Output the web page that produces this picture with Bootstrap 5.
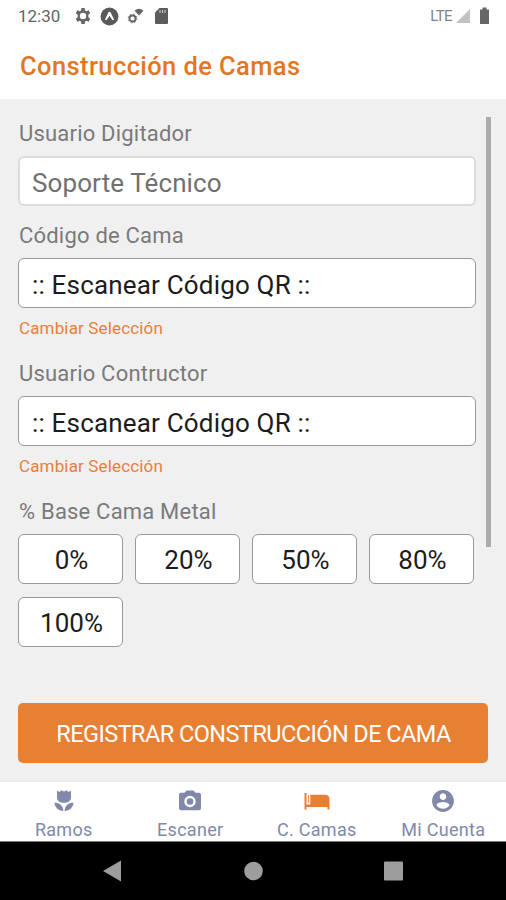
<!DOCTYPE html>
<html lang="es">
<head>
<meta charset="utf-8">
<meta name="viewport" content="width=device-width, initial-scale=1">
<title>Construcción de Camas</title>
<link href="https://cdn.jsdelivr.net/npm/bootstrap@5.3.0/dist/css/bootstrap.min.css" rel="stylesheet">
<style>
  body { font-family: Roboto, "Liberation Sans", sans-serif; background: #fff; }
  svg { display: block; flex: none; }
  .screen { width: 506px; height: 900px; }
  .status-bar { height: 32px; padding: 0 15px 0 18px; color: #666; }
  .clock { font-size: 17px; line-height: 30px; letter-spacing: 0; width: 57px; }
  .lte { font-size: 15px; line-height: 30px; color: #858585; letter-spacing: -.6px; }
  .title-bar { height: 67px; padding: 0 20px; }
  .title-bar h1 { font-size: 25.5px; line-height: 68px; font-weight: 500; color: #e2771f; letter-spacing: .4px; }
  .content { height: 683px; background: #f0f0f0; padding: 22px 18px 17px; border-bottom: 2px solid #ececec; }
  .form-area { width: 458px; }
  .caption { font-size: 22px; line-height: 26px; height: 24px; margin-bottom: 11px; color: #7a7a7a; letter-spacing: .2px; padding-left: 1px; }
  .box { height: 50px; border: 1px solid #999; border-radius: 6px; background: #fff; color: #1c1c1c; font-size: 26px; line-height: 52px; letter-spacing: .18px; }
  .field { padding: 0 13px; margin-bottom: 8px; }
  .field.locked { border: 2px solid #dcdcdc; color: #707070; line-height: 50px; padding: 0 12px; margin-bottom: 17px; letter-spacing: .1px; }
  .change { font-size: 17px; line-height: 24px; height: 24px; color: #e6803c; margin-bottom: 21px; padding-left: 1px; letter-spacing: .15px; }
  .options { gap: 13px 12px; }
  .options .box { width: 105px; padding: 3px 0 0 2px; line-height: 45px; letter-spacing: 0; }
  .scroll-track { width: 5px; height: 430px; margin: -4px -3px 0 0; background: #ababab; }
  .submit { width: 470px; height: 60px; background: #e78033; border-radius: 5px; color: #fff; font-size: 23.5px; letter-spacing: -.56px; padding: 3px 0 0 1px; }
  .submit:hover { background: #d9752b; color: #fff; }
  .tabs { height: 60px; border-bottom: 1px solid #777; }
  .tab { color: #8188aa; font-size: 18px; line-height: 24px; letter-spacing: .3px; text-decoration: none; padding: 7px 0 0 1px; gap: 5px; }
  .tab .orange { color: #e78033; }
  .system-nav { height: 58px; background: #000; color: #9d9d9d; padding: 0 102px; }
</style>
</head>
<body>
<div class="screen d-flex flex-column overflow-hidden">
  <header class="status-bar d-flex align-items-center">
    <span class="clock">12:30</span>
    <svg width="16" height="16" viewBox="2 2 20 20" fill="currentColor"><path fill-rule="evenodd" d="M10 2h4l.5 3 1.700 1 2.800-1.100 2 3.500-2.300 1.900v3.400L21 15.600l-2 3.500-2.800-1.100-1.700 1-.5 3h-4l-.5-3-1.700-1L5 19.100l-2-3.500 2.300-1.900v-3.400L3 8.400l2-3.500L7.800 6l1.700-1zM12 8a4 4 0 1 0 0 8 4 4 0 0 0 0-8z"/></svg>
    <svg class="ms-2 me-1" width="20" height="19" viewBox="-1 0 20 19"><circle cx="9.500" cy="9.500" r="9" fill="#5a5a5a"/><path d="M5 12.500 8.300 5.600Q9.500 4 10.700 5.600L14 12.500Q13 14 12 12.500L9.500 8.800 7 12.500Q6 14 5 12.500z" fill="#fff"/></svg>
    <svg class="ms-1" width="20" height="16" viewBox="0 0 20 16"><circle cx="5.500" cy="10.500" r="3" fill="none" stroke="#666" stroke-width="1.800"/><circle cx="5.500" cy="10.500" r="4.300" fill="none" stroke="#666" stroke-width="1" stroke-dasharray="1.700 1.680"/><path d="M7.500 2.700Q12 -1 16.500 2.700L12 7.500z" fill="#666"/></svg>
    <svg class="ms-2 me-1" width="13" height="16" viewBox="0 0 13 16"><path d="M4.500 0H12q1 0 1 1v14q0 1-1 1H1q-1 0-1-1V4.500z" fill="#5c5c5c"/><path d="M5 2v3M7.500 2v3M10 2v3" stroke="#ccc" stroke-width="1.100"/></svg>
    <span class="lte ms-auto me-1">LTE</span>
    <svg width="14" height="14" viewBox="0 0 14 14"><path d="M14 0v14H0z" fill="#c2c2c2"/></svg>
    <svg class="ms-2" width="13" height="18" viewBox="0 0 13 18"><path d="M4.500 .5h4v2H11v14.500H2V2.500h2.500z" fill="#666"/></svg>
  </header>

  <div class="title-bar"><h1 class="m-0">Construcción de Camas</h1></div>

  <main class="content d-flex flex-column">
    <div class="d-flex justify-content-between align-items-start">
      <div class="form-area">
        <div class="caption">Usuario Digitador</div>
        <div class="box field locked">Soporte Técnico</div>
        <div class="caption">Código de Cama</div>
        <div class="box field">:: Escanear Código QR ::</div>
        <div class="change">Cambiar Selección</div>
        <div class="caption">Usuario Contructor</div>
        <div class="box field">:: Escanear Código QR ::</div>
        <div class="change">Cambiar Selección</div>
        <div class="caption">% Base Cama Metal</div>
        <div class="options d-flex flex-wrap">
          <button class="box">0%</button>
          <button class="box">20%</button>
          <button class="box">50%</button>
          <button class="box">80%</button>
          <button class="box">100%</button>
        </div>
      </div>
      <div class="scroll-track"></div>
    </div>
    <button class="btn submit mt-auto border-0">REGISTRAR CONSTRUCCIÓN DE CAMA</button>
  </main>

  <nav class="tabs d-flex">
    <a class="tab col-3 d-flex flex-column align-items-center" href="#">
      <svg width="24" height="24" viewBox="0 0 24 24" fill="currentColor"><path d="M2.500 13.500c0 4.400 3.900 8.500 8.900 8.500 0-5-3.900-8.500-8.900-8.500zM12.600 22c5 0 8.900-4.100 8.900-8.500-5 0-8.900 3.500-8.900 8.500zM19 2v6.500c0 3.300-3 5.300-7 5.300S5 11.800 5 8.500V2c.8 0 1.700.4 2.600 1 .5-.9 1.200-1.400 2.200-1.700.9.400 1.600.9 2.200 1.500.6-.6 1.300-1.100 2.200-1.500 1 .3 1.700.8 2.200 1.700.9-.6 1.800-1 2.600-1z"/></svg>
      <span>Ramos</span>
    </a>
    <a class="tab col-3 d-flex flex-column align-items-center" href="#">
      <svg width="26" height="24" viewBox="0 0 26 24" fill="currentColor"><path fill-rule="evenodd" d="M9.500 1.500h7l2 2.300H22q2 0 2 2v13.500q0 2-2 2H4q-2 0-2-2V5.800q0-2 2-2h3.500zM13 6.800a5.700 5.700 0 1 0 0 11.400 5.700 5.700 0 0 0 0-11.400z"/><circle cx="13" cy="12.500" r="3.300"/></svg>
      <span>Escaner</span>
    </a>
    <a class="tab col-3 d-flex flex-column align-items-center" href="#">
      <svg class="orange" width="26" height="24" viewBox="0 0 26 24" fill="currentColor"><path d="M.5 4h2v12.500H25.500v4h-2v-2.500H2.500v2.500H.5zM6.300 5.700h14.700q4.500 0 4.500 4.500v6.800H2.500v-1.500h3.800z"/><path d="M4.500 6v8" stroke="currentColor" stroke-width=".8"/></svg>
      <span>C. Camas</span>
    </a>
    <a class="tab col-3 d-flex flex-column align-items-center" href="#">
      <svg width="24" height="24" viewBox="1 1 22 22" fill="currentColor"><path d="M12 2C6.480 2 2 6.480 2 12s4.480 10 10 10 10-4.480 10-10S17.520 2 12 2zm0 3c1.660 0 3 1.340 3 3s-1.340 3-3 3-3-1.340-3-3 1.340-3 3-3zm0 14.200c-2.500 0-4.710-1.280-6-3.220.03-1.990 4-3.080 6-3.080 1.990 0 5.970 1.090 6 3.080-1.290 1.940-3.500 3.220-6 3.220z"/></svg>
      <span>Mi Cuenta</span>
    </a>
  </nav>

  <footer class="system-nav d-flex align-items-center justify-content-between">
    <svg width="20" height="22" viewBox="0 0 20 22" fill="currentColor"><path d="M19 .5v21L1 11z"/></svg>
    <svg width="20" height="20" viewBox="0 0 20 20" fill="currentColor"><circle cx="10.500" cy="10" r="9.300"/></svg>
    <svg width="20" height="20" viewBox="0 0 20 20" fill="currentColor"><rect x="0" y=".5" width="19" height="19" rx="1"/></svg>
  </footer>
</div>
<script src="https://cdn.jsdelivr.net/npm/bootstrap@5.3.0/dist/js/bootstrap.bundle.min.js"></script>
</body>
</html>
